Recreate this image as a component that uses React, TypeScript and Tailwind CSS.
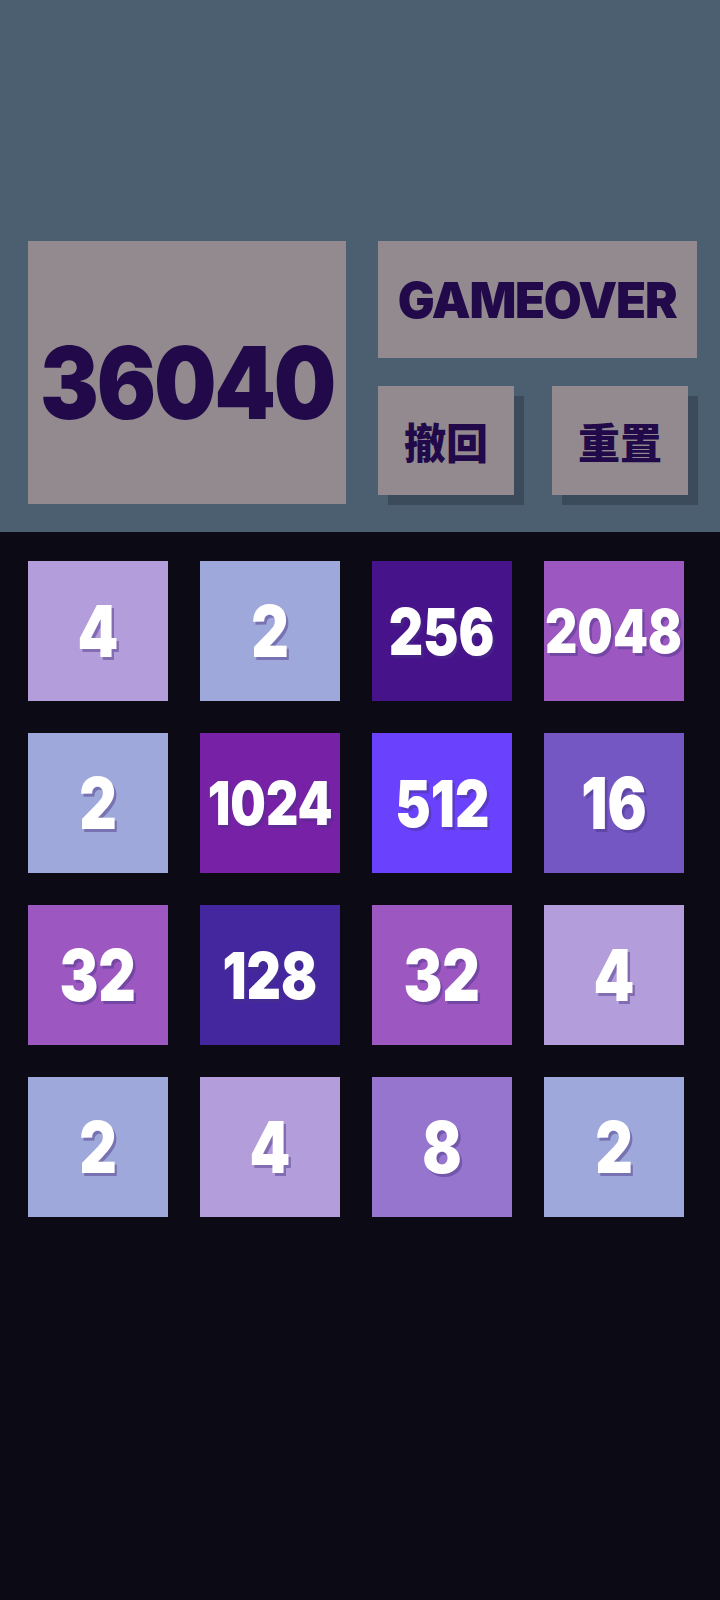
import React from "react";

const board: number[][] = [
  [4, 2, 256, 2048],
  [2, 1024, 512, 16],
  [32, 128, 32, 4],
  [2, 4, 8, 2],
];

// tile colours by value
const tileBg: Record<number, string> = {
  2: "bg-[#9fa8da]",
  4: "bg-[#b39ddb]",
  8: "bg-[#9575cd]",
  16: "bg-[#7457c3]",
  32: "bg-[#9c58c0]",
  64: "bg-[#8e44ad]",
  128: "bg-[#44279f]",
  256: "bg-[#47138b]",
  512: "bg-[#6a42fd]",
  1024: "bg-[#7721a6]",
  2048: "bg-[#9c58c0]",
};

function sizeFor(n: number) {
  const len = String(n).length;
  if (len >= 4) return "text-[61px]";
  if (len === 3) return "text-[65px]";
  return "text-[71px]";
}

function Tile({ value }: { value: number }) {
  return (
    <div
      className={`flex h-[140px] w-[140px] items-center justify-center ${tileBg[value] ?? "bg-[#3c3a4a]"}`}
    >
      <span
        className={`inline-block scale-x-[0.82] font-black leading-none text-white [text-shadow:3px_3px_0_rgba(70,50,130,0.45)] ${sizeFor(value)}`}
        style={{ fontFamily: "Inter, 'Noto Sans', sans-serif" }}
      >
        {value}
      </span>
    </div>
  );
}

function ActionButton({ label }: { label: string }) {
  return (
    <button
      type="button"
      className="flex h-[109px] w-[136px] items-center justify-center bg-[#928a8f] text-[42px] font-black leading-none text-[#21094a] shadow-[10px_10px_0_#3b4b5b]"
      style={{ fontFamily: "'Noto Sans CJK SC', 'Noto Sans', sans-serif" }}
    >
      {label}
    </button>
  );
}

export default function App() {
  return (
    <div className="min-h-[1600px] w-[720px] bg-[#0b0a15]">
      <header className="flex h-[532px] gap-[32px] bg-[#4b5f70] pl-[28px] pr-[23px] pt-[241px]">
        <div className="flex h-[263px] w-[318px] items-center justify-center bg-[#928a8f]">
          <span
            className="inline-block translate-y-[10px] scale-x-[0.88] text-[100px] font-black leading-none tracking-tight text-[#21094a]"
            style={{ fontFamily: "Inter, 'Noto Sans', sans-serif" }}
          >
            36040
          </span>
        </div>
        <div className="flex flex-1 flex-col gap-[28px]">
          <div className="flex h-[117px] items-center justify-center bg-[#928a8f]">
            <span
              className="inline-block scale-x-[0.98] text-[50px] font-black leading-none tracking-tight text-[#21094a]"
              style={{ fontFamily: "Inter, 'Noto Sans', sans-serif" }}
            >
              GAMEOVER
            </span>
          </div>
          <div className="flex gap-[38px]">
            <ActionButton label="撤回" />
            <ActionButton label="重置" />
          </div>
        </div>
      </header>
      <main className="pl-[28px] pt-[29px]">
        <div className="grid w-[656px] grid-cols-4 gap-[32px]">
          {board.flat().map((v, i) => (
            <Tile key={i} value={v} />
          ))}
        </div>
      </main>
    </div>
  );
}
